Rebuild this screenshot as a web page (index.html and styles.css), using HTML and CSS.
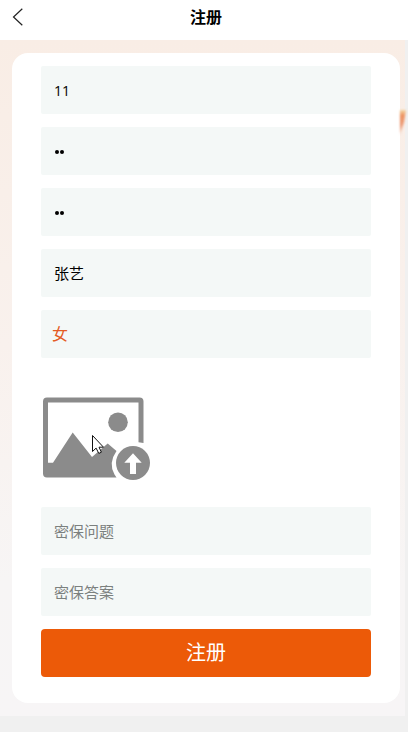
FILE: index.html
```html
<!DOCTYPE html>
<html lang="zh-CN">
<head>
<meta charset="utf-8">
<title>注册</title>
<link rel="stylesheet" href="styles.css">
</head>
<body>
<div class="app">
  <header class="navbar">
    <svg class="back" width="12" height="19" viewBox="0 0 12 19"><path d="M10.300 .7 1.500 9l8.800 8.300"/></svg>
    <h1 class="title">注册</h1>
  </header>
  <main class="page">
    <svg class="accent" width="8" height="34" viewBox="0 0 8 34">
      <defs><linearGradient id="ribbon" x2="0" y2="1"><stop stop-color="#f3d9a5"/><stop offset=".22" stop-color="#ed9363"/><stop offset=".6" stop-color="#eb9975"/><stop offset="1" stop-color="#f8ded0"/></linearGradient></defs>
      <path d="M0 3H6L4 15 0 28z" fill="url(#ribbon)"/>
    </svg>
    <form class="card">
      <div class="field latin">11</div>
      <div class="field"><span class="dots"><i></i><i></i></span></div>
      <div class="field"><span class="dots"><i></i><i></i></span></div>
      <div class="field">张艺</div>
      <div class="field gender">女</div>
      <div class="upload">
        <svg width="112" height="90" viewBox="0 0 112 90">
          <path class="frame" fill-rule="evenodd" d="M6 3.500h92.500q4 0 4 4V49l-5-.8V8.500H7V68.700h5L31.700 38.500 51 63 66.700 49.500 75.500 57Q67 69 73.500 80.500L75.500 83.500H6q-4 0-4-4v-72q0-4 4-4z"/>
          <circle class="frame" cx="77" cy="28.200" r="9.800"/>
          <circle class="frame" cx="92" cy="69" r="17"/>
          <path class="arrow" d="m92 59.300 8.700 9.500H95V80h-6V68.800h-5.700z"/>
        </svg>
        <svg class="cursor" width="14" height="21" viewBox="0 0 14 21"><path d="M1.500 1.500v16l3.600-3.400 2.700 5.300 2.600-1.200-2.400-5h4.500z"/></svg>
      </div>
      <div class="field placeholder">密保问题</div>
      <div class="field placeholder">密保答案</div>
      <button class="submit" type="button">注册</button>
    </form>
  </main>
</div>
</body>
</html>
```
FILE: styles.css
```css
* { box-sizing: border-box; }
body {
  margin: 0;
  background: #fff;
  font-family: "Liberation Sans", "Noto Sans CJK SC", sans-serif;
  color: #000;
}
.app { height: 732px; background: #f0f0f0; }
.navbar {
  display: grid;
  grid-template-columns: 40px 1fr 40px;
  align-items: center;
  height: 40px;
  padding: 0 0 4px 4px;
  background: #fff;
}
.back { margin: -1px 0 0 8px; fill: none; stroke: #222; stroke-width: 1.2; }
.title { margin: 0; font-size: 16px; line-height: 24px; text-align: center; }
.page {
  position: relative;
  width: 405px;
  height: 676px;
  padding: 13px 5px 13px 12px;
  background: linear-gradient(#f9ede5, #f9f1ed 45%, #f7f5f5 80%, #f7f5f6);
}
.accent { position: absolute; left: 400px; top: 67px; filter: blur(.8px); }
.card {
  display: flex;
  flex-direction: column;
  gap: 13px;
  height: 650px;
  padding: 13px 29px;
  background: #fff;
  border-radius: 16px;
}
.field {
  display: flex;
  align-items: center;
  height: 48px;
  padding: 0 13px 1px;
  border-radius: 2px;
  background: #f4f8f7;
  font-size: 15px;
}
.latin { padding: 1px 13px 0; font-family: "Open Sans", "Noto Sans", sans-serif; font-size: 14px; }
.dots { display: flex; gap: 1px; padding: 3px 0 0 1px; }
.dots i { width: 4px; height: 4px; border-radius: 50%; background: #000; }
.gender { padding: 0 11px 2px; font-size: 16px; color: #e45b24; }
.upload { position: relative; height: 123px; padding-top: 23px; }
.upload svg { display: block; }
.frame { fill: #8b8b8b; }
.arrow { fill: #fff; }
.upload .cursor { position: absolute; left: 50px; top: 63px; fill: #fff; stroke: #111; stroke-width: 1; }
.placeholder { color: #7b807e; }
.submit {
  height: 48px;
  padding: 0 0 4px;
  border: 0;
  border-radius: 4px;
  background: #ec5a08;
  color: #fff;
  font: 20px "Liberation Sans", "Noto Sans CJK SC", sans-serif;
}
```
